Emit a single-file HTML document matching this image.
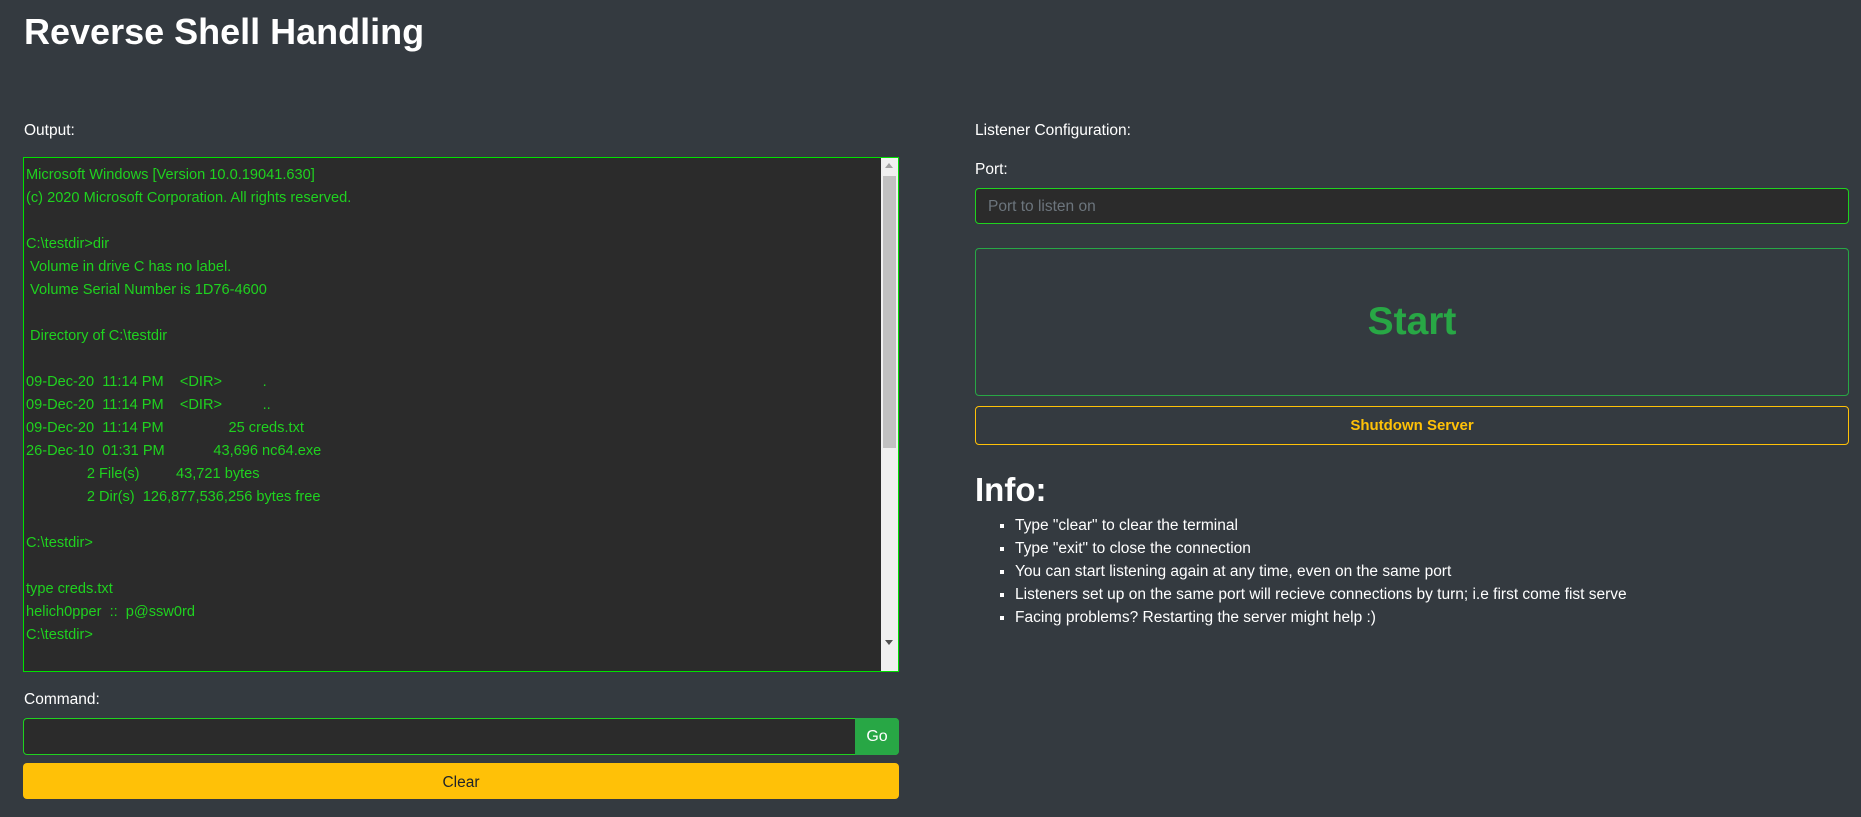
<!DOCTYPE html>
<html><head><meta charset="utf-8"><style>
*{box-sizing:border-box;margin:0;padding:0}
body{width:1861px;height:817px;background:#343a40;font-family:"Liberation Sans",sans-serif;color:#fff;position:relative;overflow:hidden}
.a{position:absolute}
h1{position:absolute;left:24px;top:6px;font-size:36px;font-weight:bold;line-height:52px}
.lbl{font-size:15.5px;line-height:20px}
.ta{left:23px;top:157px;width:876px;height:515px;background:#2b2b2b;border:1px solid #00e000;overflow:hidden}
.ta pre{font-family:"Liberation Sans",sans-serif;font-size:14.6px;line-height:23px;color:#1fd21f;padding:6px 2px;white-space:pre}
.sb{right:0;top:0;width:17px;height:100%;background:#f0f0f0}
.th{left:2px;top:18px;width:13px;height:272px;background:#c1c1c1}
.btn{display:flex;align-items:center;justify-content:center;border-radius:4px}
ul{position:absolute;left:1015px;top:514px;list-style:square;font-size:15.5px;line-height:23px}
</style></head><body>
<h1>Reverse Shell Handling</h1>
<div class="a lbl" style="left:24px;top:121px">Output:</div>
<div class="a ta"><pre>Microsoft Windows [Version 10.0.19041.630]
(c) 2020 Microsoft Corporation. All rights reserved.

C:\testdir&gt;dir
 Volume in drive C has no label.
 Volume Serial Number is 1D76-4600

 Directory of C:\testdir

09-Dec-20  11:14 PM    &lt;DIR&gt;          .
09-Dec-20  11:14 PM    &lt;DIR&gt;          ..
09-Dec-20  11:14 PM                25 creds.txt
26-Dec-10  01:31 PM            43,696 nc64.exe
               2 File(s)         43,721 bytes
               2 Dir(s)  126,877,536,256 bytes free

C:\testdir&gt;

type creds.txt
helich0pper  ::  p@ssw0rd
C:\testdir&gt;</pre>
<div class="a sb"><div class="a" style="left:4px;top:5px;width:0;height:0;border-left:4px solid transparent;border-right:4px solid transparent;border-bottom:5px solid #a3a3a3"></div><div class="a th"></div><div class="a" style="left:4px;bottom:26px;width:0;height:0;border-left:4px solid transparent;border-right:4px solid transparent;border-top:5px solid #505050"></div></div>
</div>
<div class="a lbl" style="left:24px;top:690px">Command:</div>
<div class="a" style="left:23px;top:718px;width:876px;height:37px;background:#2b2b2b;border:1px solid #1fd21f;border-radius:4px"></div>
<div class="a btn" style="left:855px;top:718px;width:44px;height:37px;background:#28a745;border-radius:0 4px 4px 0;font-size:16px">Go</div>
<div class="a btn" style="left:23px;top:763px;width:876px;height:36px;background:#ffc107;color:#212529;font-size:15.5px;padding-top:3px">Clear</div>

<div class="a lbl" style="left:975px;top:121px">Listener Configuration:</div>
<div class="a lbl" style="left:975px;top:160px">Port:</div>
<div class="a" style="left:975px;top:188px;width:874px;height:36px;background:#2b2b2b;border:1px solid #1fd21f;border-radius:4px;color:#6c757d;font-size:15.5px;line-height:36px;padding-left:12px">Port to listen on</div>
<div class="a btn" style="left:975px;top:248px;width:874px;height:148px;border:1px solid #28a745;color:#28a745;font-size:39px;font-weight:bold">Start</div>
<div class="a btn" style="left:975px;top:406px;width:874px;height:39px;border:1px solid #ffc107;color:#ffc107;font-size:15px;font-weight:bold">Shutdown Server</div>
<div class="a" style="left:975px;top:470px;font-size:33px;font-weight:bold;line-height:40px">Info:</div>
<ul>
<li>Type "clear" to clear the terminal</li>
<li>Type "exit" to close the connection</li>
<li>You can start listening again at any time, even on the same port</li>
<li>Listeners set up on the same port will recieve connections by turn; i.e first come fist serve</li>
<li>Facing problems? Restarting the server might help :)</li>
</ul>
</body></html>
